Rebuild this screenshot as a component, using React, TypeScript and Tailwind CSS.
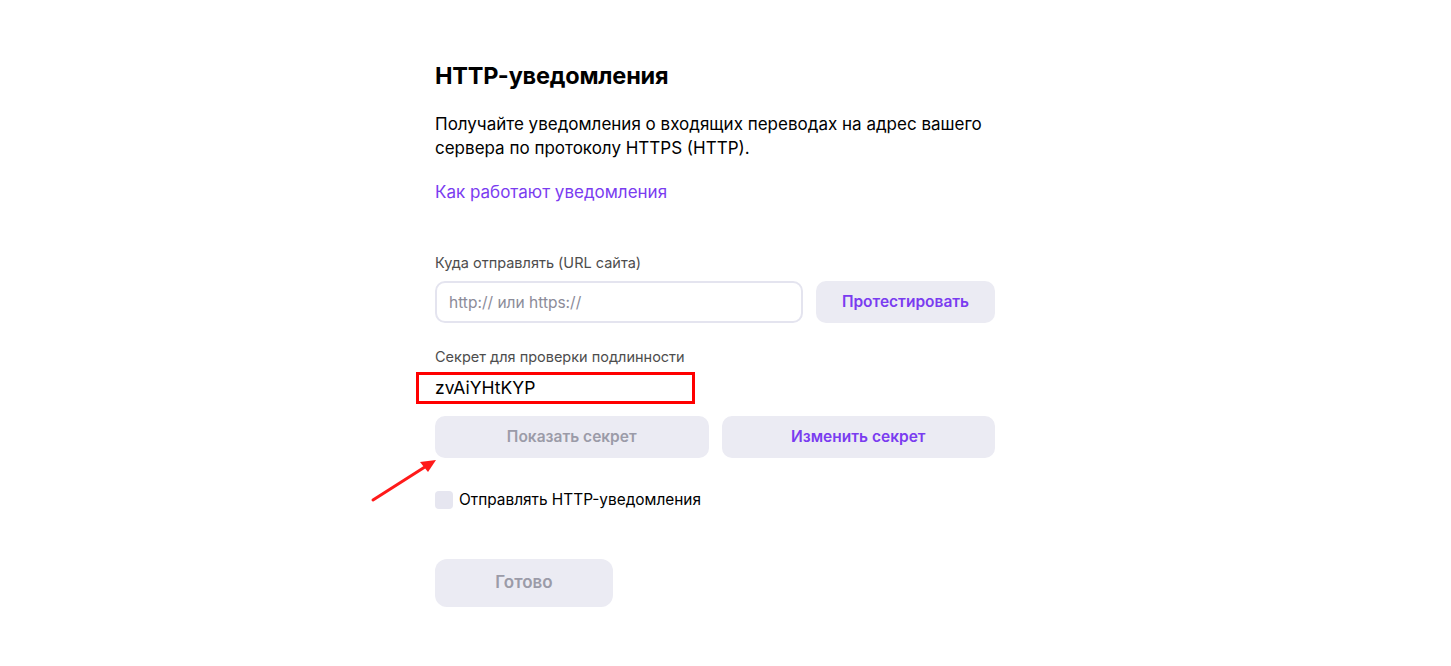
import { useState } from 'react';

const font = { fontFamily: 'Inter, "Noto Sans", sans-serif' };

export default function App() {
  const [url, setUrl] = useState('');
  const [enabled, setEnabled] = useState(false);

  return (
    <div className="min-h-screen bg-white text-black" style={font}>
      <div className="mx-auto w-[581px] pt-[60px] pb-[60px]">
        <h1 className="text-[23.5px] font-bold leading-[32px] tracking-[-0.2px]">HTTP-уведомления</h1>

        <p className="mt-[20px] text-[17px] leading-[24px] w-[560px]">
          Получайте уведомления о входящих переводах на адрес вашего сервера по протоколу HTTPS (HTTP).
        </p>

        <a href="#" className="mt-[20px] block text-[17px] leading-[24px] text-[#7a3cf0]">
          Как работают уведомления
        </a>

        {/* URL */}
        <div className="mt-[49px] text-[14.5px] leading-[20px] text-[#4d4d4d]">Куда отправлять (URL сайта)</div>
        <div className="mt-[8px] flex gap-[13px] w-[560px]">
          <input
            value={url}
            onChange={(e) => setUrl(e.target.value)}
            placeholder="http:// или https://"
            className="h-[42px] w-[368px] rounded-[10px] border-2 border-[#e4e4ef] px-[12px] text-[15.5px] text-black outline-none placeholder:text-[#8c8c99]"
          />
          <button className="h-[42px] flex-1 rounded-[10px] bg-[#ebebf3] text-[15.5px] font-semibold text-[#7a3cf0]">
            Протестировать
          </button>
        </div>

        {/* Secret */}
        <div className="mt-[24px] text-[14.5px] leading-[20px] text-[#4d4d4d]">Секрет для проверки подлинности</div>
        <div className="relative mt-[6px] h-[30px] text-[17.5px] leading-[30px]">
          zvAiYHtKYP
          <div className="pointer-events-none absolute left-[-19px] top-[-1px] h-[32px] w-[279px] border-[3px] border-[#ff0000]" />
        </div>
        <div className="mt-[13px] flex gap-[13px] w-[560px]">
          <button className="h-[42px] flex-1 rounded-[10px] bg-[#ebebf3] text-[15.5px] font-semibold text-[#9b9ba8]">
            Показать секрет
          </button>
          <button className="h-[42px] flex-1 rounded-[10px] bg-[#ebebf3] text-[15.5px] font-semibold text-[#7a3cf0]">
            Изменить секрет
          </button>
        </div>

        <label className="relative mt-[31px] flex items-center gap-[6px] cursor-pointer">
          <svg className="pointer-events-none absolute left-[-65px] top-[-32px]" width="68" height="46" viewBox="0 0 68 46">
            <line x1="3" y1="43" x2="58" y2="8" stroke="#ff1a1a" strokeWidth="3" strokeLinecap="round" />
            <polygon points="66,3 50,5 58,15" fill="#ff1a1a" />
          </svg>
          <button
            type="button"
            onClick={() => setEnabled(!enabled)}
            className="h-[18px] w-[18px] rounded-[4px] bg-[#e6e6f0]"
          />
          <span className="text-[15.4px] leading-[22px]">Отправлять HTTP-уведомления</span>
        </label>

        <button className="mt-[48px] h-[48px] w-[178px] rounded-[12px] bg-[#ebebf3] text-[17px] font-semibold text-[#9b9ba8]">
          Готово
        </button>
      </div>
    </div>
  );
}
